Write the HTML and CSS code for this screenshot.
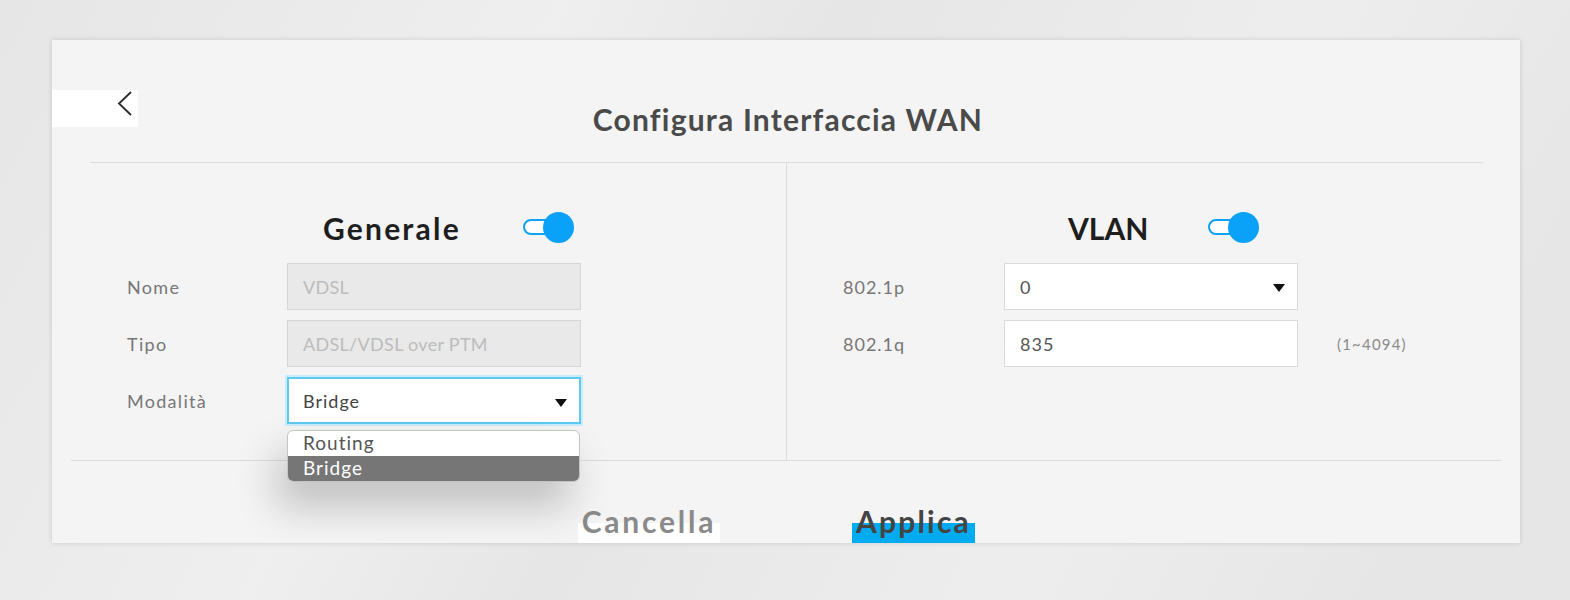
FILE: index.html
```html
<!DOCTYPE html>
<html lang="it">
<head>
<meta charset="utf-8">
<title>Configura Interfaccia WAN</title>
<link rel="stylesheet" href="styles.css">
</head>
<body>
<div class="card">
  <div class="header">
    <div class="back">
      <svg width="16" height="28" viewBox="0 0 16 28"><path d="M14 2 L2 13.5 L14 25" fill="none" stroke="#2a2a2a" stroke-width="1.8"/></svg>
    </div>
    <h1 class="title">Configura Interfaccia WAN</h1>
    <div class="spacer"></div>
  </div>
  <div class="rule-top"></div>
  <div class="sections">
    <div class="col col-left">
      <div class="col-head head-left">
        <span class="col-title">Generale</span>
        <span class="toggle"><span class="track"></span><span class="knob"></span></span>
      </div>
      <div class="row">
        <span class="label">Nome</span>
        <div class="field disabled">VDSL</div>
      </div>
      <div class="row">
        <span class="label">Tipo</span>
        <div class="field disabled">ADSL/VDSL over PTM</div>
      </div>
      <div class="row">
        <span class="label">Modalità</span>
        <div class="select-wrap">
          <div class="field select focused">Bridge<span class="arrow"></span></div>
          <div class="dropdown">
            <div class="opt">Routing</div>
            <div class="opt sel">Bridge</div>
          </div>
        </div>
      </div>
    </div>
    <div class="vline"></div>
    <div class="col col-right">
      <div class="col-head head-right">
        <span class="col-title vlan">VLAN</span>
        <span class="toggle"><span class="track"></span><span class="knob"></span></span>
      </div>
      <div class="row">
        <span class="label">802.1p</span>
        <div class="field select">0<span class="arrow"></span></div>
      </div>
      <div class="row">
        <span class="label">802.1q</span>
        <div class="field">835</div>
        <span class="hint">(1~4094)</span>
      </div>
    </div>
  </div>
  <div class="rule-bottom"></div>
  <div class="footer">
    <div class="btn cancel"><span>Cancella</span></div>
    <div class="btn apply"><span>Applica</span></div>
  </div>
</div>
</body>
</html>
```
FILE: styles.css
```css
* { box-sizing: border-box; }
html, body { margin: 0; padding: 0; }
body {
  width: 1570px;
  height: 600px;
  overflow: hidden;
  font-family: "Lato", "Open Sans", sans-serif;
  background:
    linear-gradient(118deg, rgba(255,255,255,0) 0%, rgba(255,255,255,0.35) 30%, rgba(255,255,255,0) 45%, rgba(255,255,255,0.3) 70%, rgba(255,255,255,0) 90%),
    #e6e6e6;
  padding-top: 40px;
  padding-left: 52px;
}
.card {
  width: 1468px;
  height: 503px;
  background: #f4f4f4;
  box-shadow: 0 0 5px rgba(0,0,0,0.14);
  overflow: hidden;
  position: relative;
}
.header {
  display: grid;
  grid-template-columns: 86px 1fr 86px;
  align-items: start;
  height: 122px;
}
.back {
  margin-top: 50px;
  height: 37px;
  background: #fff;
  display: flex;
  justify-content: flex-end;
  padding-right: 5px;
}
.title {
  margin: 60px 0 0 0;
  text-align: center;
  font-size: 30px;
  line-height: 38px;
  font-weight: 700;
  color: #4a4a4a;
  letter-spacing: 1.2px;
  padding-left: 4px;
}
.rule-top {
  height: 1px;
  background: #dcdcdc;
  margin: 0 37px 0 38px;
}
.sections {
  display: flex;
  height: 297px;
}
.col { flex: 0 0 734px; }
.col-right { flex: 1; }
.vline { width: 1px; background: #dcdcdc; flex: 0 0 1px; }
.col-head {
  display: flex;
  align-items: center;
  height: 31px;
  margin-top: 49px;
  margin-bottom: 20px;
}
.head-left { padding-left: 271px; }
.head-right { padding-left: 281px; }
.col-title {
  font-size: 30px;
  font-weight: 700;
  color: #1e1e1e;
  letter-spacing: 2.2px;
}
.col-title.vlan { letter-spacing: 0; }
.head-left .toggle { margin-left: 62px; }
.head-right .toggle { margin-left: 60px; }
.toggle {
  position: relative;
  width: 50px;
  height: 31px;
  display: inline-block;
}
.track {
  position: absolute;
  left: 0;
  top: 7px;
  width: 40px;
  height: 16px;
  border: 2px solid #0ea2f2;
  border-radius: 8px;
  background: #fff;
}
.knob {
  position: absolute;
  right: -1px;
  top: 0;
  width: 31px;
  height: 31px;
  border-radius: 50%;
  background: #0aa1f8;
}
.row {
  display: flex;
  align-items: center;
  height: 47px;
  margin-bottom: 10px;
}
.col-left .row { padding-left: 75px; }
.col-right .row { padding-left: 56px; }
.label {
  width: 160px;
  font-size: 18px;
  color: #777;
  letter-spacing: 1.3px;
}
.col-right .label { letter-spacing: 1px; }
.field {
  width: 294px;
  height: 47px;
  border: 1px solid #dadada;
  background: #fff;
  font-size: 18px;
  color: #555;
  display: flex;
  align-items: center;
  padding-left: 15px;
  position: relative;
  letter-spacing: 1px;
}
.field.disabled {
  background: #e9e9e9;
  color: #bcbcbc;
  border-color: #d5d5d5;
  letter-spacing: 0.3px;
}
.field.focused {
  border: 2px solid #5ec9f2;
  box-shadow: 0 0 0 2px #c9ecfb;
  padding-left: 14px;
  color: #444;
}
.arrow {
  position: absolute;
  right: 12px;
  top: 20px;
  width: 0;
  height: 0;
  border-left: 6px solid transparent;
  border-right: 6px solid transparent;
  border-top: 8px solid #111;
}
.col-right .field { margin-left: 1px; }
.select-wrap { position: relative; }
.dropdown {
  position: absolute;
  left: 0;
  top: 53px;
  width: 293px;
  background: #fff;
  border: 1px solid #c4c4c4;
  border-radius: 6px;
  overflow: hidden;
  box-shadow: -10px 24px 40px rgba(0,0,0,0.22);
  z-index: 2;
}
.opt {
  height: 25px;
  line-height: 24px;
  font-size: 19px;
  color: #555;
  padding-left: 15px;
  letter-spacing: 1px;
}
.opt.sel { background: #767676; color: #fff; }
.hint {
  margin-left: 39px;
  font-size: 15px;
  color: #8a8a8a;
  letter-spacing: 1.2px;
}
.rule-bottom {
  height: 1px;
  background: #dcdcdc;
  margin: 0 19px;
}
.footer {
  display: flex;
  padding-left: 526px;
  padding-top: 62px;
}
.btn {
  height: 40px;
  font-size: 30px;
  font-weight: 700;
  text-align: center;
}
.btn span { display: block; margin-top: -21px; line-height: 38px; }
.cancel { width: 142px; background: #fff; color: #8a8a8a; letter-spacing: 2.8px; }
.apply { width: 123px; background: #00abf0; color: #444; margin-left: 132px; letter-spacing: 2.2px; }
```
